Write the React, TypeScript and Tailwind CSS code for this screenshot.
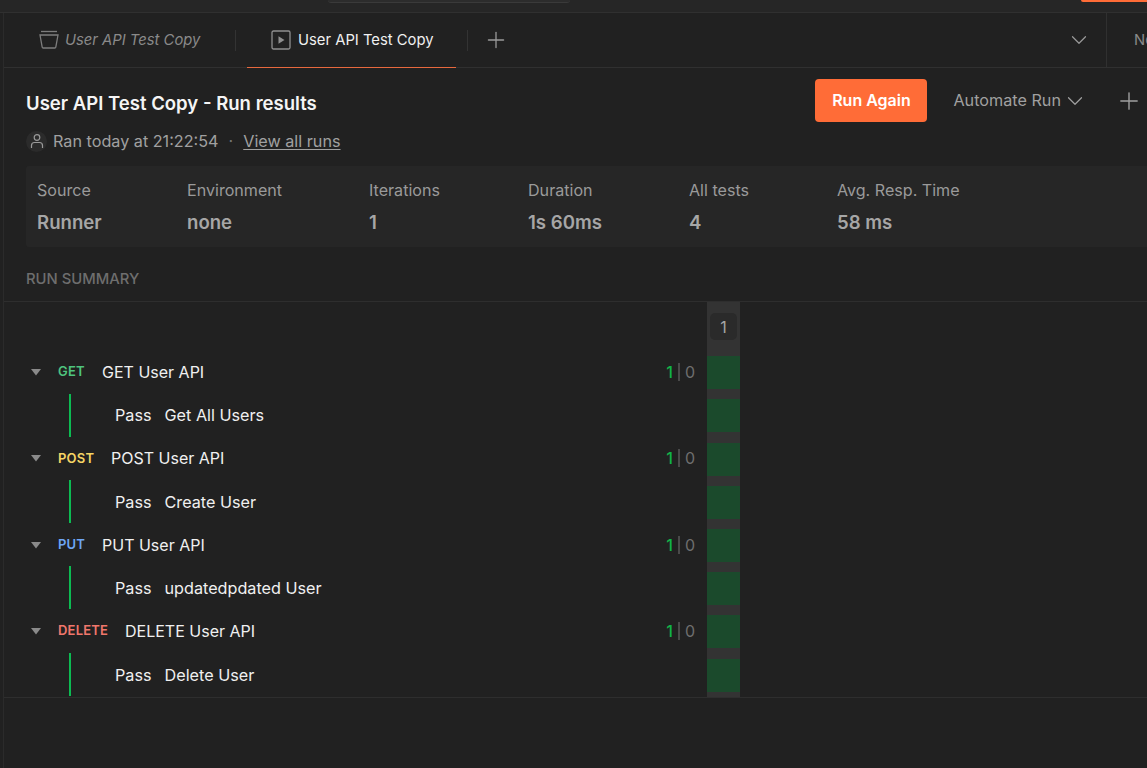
import { ChevronDown, Plus } from 'lucide-react';

const stats = [
  { label: 'Source', value: 'Runner', w: 'w-[150px]' },
  { label: 'Environment', value: 'none', w: 'w-[182px]' },
  { label: 'Iterations', value: '1', w: 'w-[159px]' },
  { label: 'Duration', value: '1s 60ms', w: 'w-[161px]' },
  { label: 'All tests', value: '4', w: 'w-[148px]' },
  { label: 'Avg. Resp. Time', value: '58 ms', w: 'w-[200px]' },
];

const groups = [
  { method: 'GET', color: 'text-[#4fc47f]', name: 'GET User API', test: 'Get All Users', gap: 'w-[44px]' },
  { method: 'POST', color: 'text-[#f5d565]', name: 'POST User API', test: 'Create User', gap: 'w-[53px]' },
  { method: 'PUT', color: 'text-[#6ea6f5]', name: 'PUT User API', test: 'updatedpdated User', gap: 'w-[44px]' },
  { method: 'DELETE', color: 'text-[#f0776c]', name: 'DELETE User API', test: 'Delete User', gap: 'w-[67px]' },
];

function CollectionIcon() {
  return (
    <svg width="20" height="20" viewBox="0 0 20 20" fill="none" stroke="#7d7d7d" strokeWidth="1.3">
      <path d="M2 1.5h16" />
      <path d="M1 5h18l-2.2 12.2a1 1 0 0 1-1 .8H4.2a1 1 0 0 1-1-.8z" />
    </svg>
  );
}

function RunnerIcon() {
  return (
    <svg width="20" height="20" viewBox="0 0 20 20" fill="none">
      <rect x="1" y="1" width="18" height="18" rx="1.5" stroke="#8f8f8f" strokeWidth="1.3" />
      <path d="M7.5 6.2 13.5 10l-6 3.8z" fill="#8f8f8f" />
    </svg>
  );
}

function PersonIcon() {
  return (
    <svg width="16" height="16" viewBox="0 0 16 16" fill="none" stroke="#9a9a9a" strokeWidth="1.2">
      <circle cx="8" cy="4.5" r="2.8" />
      <path d="M2.5 15v-2.5a3 3 0 0 1 3-3h5a3 3 0 0 1 3 3V15" />
    </svg>
  );
}

function Caret() {
  return (
    <svg width="12" height="8" viewBox="0 0 12 8" className="block">
      <path d="M1 1h10L6 7.5z" fill="#8a8a8a" />
    </svg>
  );
}

function Row({ g }: { g: (typeof groups)[number] }) {
  return (
    <>
      <div className="flex h-[43.2px] items-center">
        <div className="ml-[26px] flex w-[28px] shrink-0">
          <Caret />
        </div>
        <div className={`${g.gap} shrink-0 text-[13px] font-semibold tracking-[0.2px] ${g.color}`}>{g.method}</div>
        <div className="text-[16px] text-[#f0f0f0]">{g.name}</div>
        <div className="ml-auto mr-[12px] flex items-center text-[16px] leading-none">
          <span className="font-medium text-[#12b347]">1</span>
          <span className="mx-[5px] h-[18px] w-[2px] bg-[#4a4a4a]" />
          <span className="text-[#6e6e6e]">0</span>
        </div>
      </div>
      <div className="flex h-[43.2px] items-center">
        <div className="ml-[65px] h-[43px] w-[2px] bg-[#0cbb52]" />
        <div className="ml-[44px] pt-[1px] text-[16.2px] text-[#f0f0f0]">Pass</div>
        <div className="ml-[13px] pt-[1px] text-[16.2px] text-[#f0f0f0]">{g.test}</div>
      </div>
    </>
  );
}

export default function App() {
  return (
    <div className="flex h-screen min-w-[1147px] flex-col overflow-hidden bg-[#212121] font-['Inter',sans-serif]">
      <div className="relative h-[13px] shrink-0 border-b border-[#303030] bg-[#262626]">
        <div className="absolute left-[328px] top-0 h-[3px] w-[242px] rounded-b-[3px] border-b border-[#3a3a3a] bg-[#2c2c2c]" />
        <div className="absolute right-0 top-0 h-[2px] w-[66px] rounded-bl-[3px] bg-[#ff6c37]" />
      </div>

      <div className="flex min-h-0 flex-1">
        <div className="w-[4px] shrink-0 border-r border-[#2b2b2b]" />
        <div className="flex min-w-0 flex-1 flex-col">
          <div className="flex h-[55px] shrink-0 items-center border-b border-[#303030]">
            <div className="flex h-full w-[231px] shrink-0 items-center pl-[35px]">
              <CollectionIcon />
              <span className="ml-[6px] text-[14.8px] italic text-[#8a8a8a]">User API Test Copy</span>
            </div>
            <div className="h-[21px] w-px bg-[#333]" />
            <div className="relative -mb-px ml-[11px] flex h-[55px] w-[209px] shrink-0 items-center border-b border-[#e8693e] pl-[24px]">
              <RunnerIcon />
              <span className="ml-[7px] text-[14.8px] text-[#f0f0f0]">User API Test Copy</span>
            </div>
            <div className="ml-[11px] h-[21px] w-px bg-[#333]" />
            <Plus size={26} strokeWidth={1.2} className="ml-[15px] text-[#9a9a9a]" />
            <ChevronDown size={26} strokeWidth={1.1} className="ml-auto mr-[14px] text-[#9a9a9a]" />
            <div className="flex h-full w-[41px] shrink-0 items-center overflow-hidden whitespace-nowrap border-l border-[#303030] pl-[27px] text-[14.8px] text-[#8a8a8a]">
              No Environment
            </div>
          </div>

          <div className="flex shrink-0 items-start pl-[22px] pr-[4px] pt-[11px]">
            <div className="pt-[12px]">
              <h1 className="text-[18.55px] font-semibold leading-[24px] text-[#f5f5f5]">User API Test Copy - Run results</h1>
              <div className="mt-[14px] flex items-center text-[16.2px] text-[#a0a0a0]">
                <span className="flex h-[21px] w-[21px] items-center justify-center rounded-full bg-[#2b2b2b]">
                  <PersonIcon />
                </span>
                <span className="ml-[6px]">Ran today at 21:22:54</span>
                <span className="mx-[10px] text-[#777]">·</span>
                <span className="underline underline-offset-2">View all runs</span>
              </div>
            </div>
            <button className="ml-auto h-[43px] w-[112px] rounded-[4px] bg-[#ff6c37] pb-[2px] text-[16px] font-semibold text-white">Run Again</button>
            <div className="ml-[26px] flex h-[43px] items-center text-[16.2px] text-[#a0a0a0]">
              Automate Run
              <ChevronDown size={26} strokeWidth={1.1} className="ml-px" />
            </div>
            <div className="ml-[27px] flex h-[43px] items-center">
              <Plus size={28} strokeWidth={1.2} className="text-[#a0a0a0]" />
            </div>
          </div>

          <div className="ml-[22px] mt-[13px] flex h-[81px] shrink-0 items-center rounded-l-[3px] bg-[#262626] pl-[11px]">
            {stats.map((s) => (
              <div key={s.label} className={`${s.w} shrink-0`}>
                <div className="text-[16.1px] leading-[20px] text-[#9a9a9a]">{s.label}</div>
                <div className="mt-[11px] text-[18.6px] font-semibold leading-[22px] text-[#a6a6a6]">{s.value}</div>
              </div>
            ))}
          </div>

          <div className="flex h-[55px] shrink-0 items-start border-b border-[#2e2e2e] pl-[22px] pt-[21px] text-[14.8px] font-medium text-[#6e6e6e]">
            RUN SUMMARY
          </div>

          <div className="flex h-[396px] shrink-0 border-b border-[#2e2e2e]">
            <div className="w-[703px] shrink-0 pt-[48px]">
              {groups.map((g) => (
                <Row key={g.method} g={g} />
              ))}
            </div>
            <div className="flex w-[33px] shrink-0 flex-col overflow-hidden bg-[#333333]">
              <div className="flex h-[54px] shrink-0 items-start justify-center pt-[11px]">
                <div className="flex h-[27px] w-[27px] items-center justify-center rounded-[5px] bg-[#2a2a2a] text-[16px] text-[#a6a6a6]">1</div>
              </div>
              {groups.flatMap((g) => [g.method + '-a', g.method + '-b']).map((k) => (
                <div key={k} className="mb-[10.2px] h-[33px] shrink-0 bg-[#1b4a2c]" />
              ))}
            </div>
          </div>
        </div>
      </div>
    </div>
  );
}
